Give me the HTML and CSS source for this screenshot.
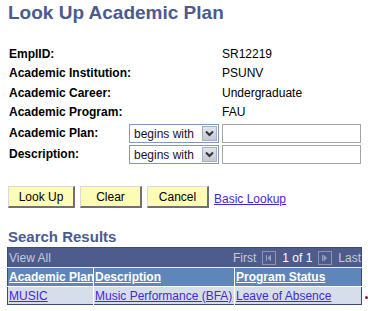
FILE: index.html
```html
<!DOCTYPE html>
<html lang="en">
<head>
  <meta charset="UTF-8" />
  <title>Look Up Academic Plan</title>
  <link rel="stylesheet" href="styles.css">
</head>
<body>

  <h1 class="page-title">Look Up Academic Plan</h1>

  <div class="search-form">
    <div class="label">EmplID:</div>
    <div class="value">SR12219</div>

    <div class="label">Academic Institution:</div>
    <div class="value">PSUNV</div>

    <div class="label">Academic Career:</div>
    <div class="value">Undergraduate</div>

    <div class="label">Academic Program:</div>
    <div class="value">FAU</div>

    <div class="label field-row">Academic Plan:</div>
    <div class="operator field-row">
      <span class="op-text">begins with</span>
      <span class="op-arrow">
        <svg width="9" height="7" viewBox="0 0 9 7"><path d="M1 1.5 L4.5 5 L8 1.5" fill="none" stroke="#333" stroke-width="2"/></svg>
      </span>
    </div>
    <input class="text-input field-row" type="text">

    <div class="label field-row">Description:</div>
    <div class="operator field-row">
      <span class="op-text">begins with</span>
      <span class="op-arrow">
        <svg width="9" height="7" viewBox="0 0 9 7"><path d="M1 1.5 L4.5 5 L8 1.5" fill="none" stroke="#333" stroke-width="2"/></svg>
      </span>
    </div>
    <input class="text-input field-row" type="text">
  </div>

  <div class="button-row">
    <button class="ps-btn btn-lookup">Look Up</button>
    <button class="ps-btn">Clear</button>
    <button class="ps-btn">Cancel</button>
    <a href="#" class="basic-link">Basic Lookup</a>
  </div>

  <h2 class="section-title">Search Results</h2>

  <div class="results-wrap">
    <table class="results-grid">
      <colgroup>
        <col class="col-plan">
        <col class="col-desc">
        <col class="col-status">
      </colgroup>
      <tr class="pager-row">
        <td colspan="3">
          <div class="pager">
            <span class="view-all">View All</span>
            <span class="pager-nav">
              <span class="pager-dim">First</span>
              <span class="nav-icon">
                <svg width="12" height="12" viewBox="0 0 12 12"><rect x="3" y="3" width="1" height="6" fill="#9aa0b8"/><path d="M8 2.5 L8 9.5 L4.5 6 Z" fill="#9aa0b8"/></svg>
              </span>
              <span class="pager-count">1 of 1</span>
              <span class="nav-icon">
                <svg width="12" height="12" viewBox="0 0 12 12"><rect x="3" y="3" width="1" height="6" fill="#9aa0b8"/><path d="M4.5 2.5 L4.5 9.5 L8 6 Z" fill="#9aa0b8"/></svg>
              </span>
              <span class="pager-dim">Last</span>
            </span>
          </div>
        </td>
      </tr>
      <tr class="head-row">
        <th><a href="#">Academic Plan</a></th>
        <th><a href="#">Description</a></th>
        <th><a href="#">Program Status</a></th>
      </tr>
      <tr class="data-row">
        <td><a href="#">MUSIC</a></td>
        <td><a href="#">Music Performance (BFA)</a></td>
        <td><a href="#">Leave of Absence</a></td>
      </tr>
    </table>
    <span class="edge-dot"></span>
  </div>

</body>
</html>
```

FILE: styles.css
```css
body {
  margin: 0;
  padding: 0 8px;
  font-family: "Liberation Sans", Arial, sans-serif;
  font-size: 12px;
  color: #000;
  background-color: #fff;
}

.page-title {
  margin: 1px 0 19px 0;
  font-size: 19px;
  line-height: 24px;
  font-weight: bold;
  color: #4b5a8f;
}

/* search criteria */
.search-form {
  display: grid;
  grid-template-columns: 121px 93px 139px;
  grid-template-rows: 20px 19px 20px 19px 21px 21px;
  align-items: center;
}

.label {
  grid-column: 1;
  font-weight: bold;
  padding-left: 1px;
  line-height: 19px;
  white-space: nowrap;
}

.value {
  grid-column: 3;
  line-height: 19px;
}

.field-row {
  align-self: end;
}

.operator {
  grid-column: 2;
  width: 90px;
  height: 19px;
  box-sizing: border-box;
  border: 1px solid #7f9abc;
  background-color: #fff;
  display: flex;
  align-items: center;
  justify-content: space-between;
}

.op-text {
  padding-left: 4px;
  color: #1e1030;
}

.op-arrow {
  width: 15px;
  height: 15px;
  margin-right: 1px;
  box-sizing: border-box;
  border: 1px solid #a9afbf;
  background: linear-gradient(#e2e5ec, #c3c8d5);
  display: flex;
  align-items: center;
  justify-content: center;
}

.text-input {
  grid-column: 3;
  width: 139px;
  height: 19px;
  box-sizing: border-box;
  margin: 0;
  border: 1px solid #a5a5a5;
  background-color: #fff;
  font-family: inherit;
  font-size: 12px;
}

/* buttons */
.button-row {
  margin-top: 22px;
  display: flex;
  align-items: flex-end;
  gap: 5px;
}

.ps-btn {
  width: 62px;
  height: 22px;
  padding: 0;
  background-color: #fcfcb6;
  border-style: solid;
  border-width: 1px 2px 2px 1px;
  border-color: #dadada #707070 #707070 #dadada;
  font-family: inherit;
  font-size: 12px;
  color: #000;
  cursor: pointer;
}

.btn-lookup {
  width: 67px;
}

.basic-link {
  color: #4626d6;
  line-height: 15px;
  margin-bottom: 1px;
}

/* results */
.section-title {
  margin: 18px 0 0 0;
  font-size: 15px;
  line-height: 21px;
  font-weight: bold;
  color: #4b5a8f;
}

.results-wrap {
  display: flex;
  align-items: flex-end;
  margin-left: -1px;
}

.results-grid {
  flex: none;
  width: 355px;
  table-layout: fixed;
  border-collapse: collapse;
  border: 1px solid #3b4b7d;
}

.col-plan {
  width: 86px;
}

.col-desc {
  width: 141px;
}

.results-grid td,
.results-grid th {
  padding: 0 0 0 1px;
  text-align: left;
  white-space: nowrap;
  overflow: hidden;
}

.pager-row td {
  background-color: #4d5b8d;
  height: 19px;
  padding-right: 0;
}

.pager {
  display: flex;
  justify-content: space-between;
  align-items: center;
}

.view-all {
  color: #c6cada;
}

.pager-nav {
  display: flex;
  align-items: center;
  gap: 6px;
}

.pager-dim {
  color: #c6cada;
}

.pager-count {
  color: #fff;
}

.nav-icon {
  width: 12px;
  height: 12px;
  border: 1px solid #8e94ad;
  display: flex;
}

.head-row th {
  background-color: #5f86b9;
  height: 18px;
  border-top: 1px solid #e8ecf4;
  border-left: 1px solid #fff;
}

.head-row th:first-child,
.data-row td:first-child {
  border-left: none;
}

.head-row a {
  color: #fff;
  font-weight: bold;
}

.data-row td {
  background-color: #d6deec;
  height: 17px;
  border-left: 1px solid #fff;
  border-top: 1px solid #fff;
}

.data-row a {
  color: #4626d6;
}

.edge-dot {
  flex: none;
  width: 3px;
  height: 3px;
  margin: 0 0 6px 3px;
  border-radius: 50%;
  background-color: #8a1c3c;
}
```
